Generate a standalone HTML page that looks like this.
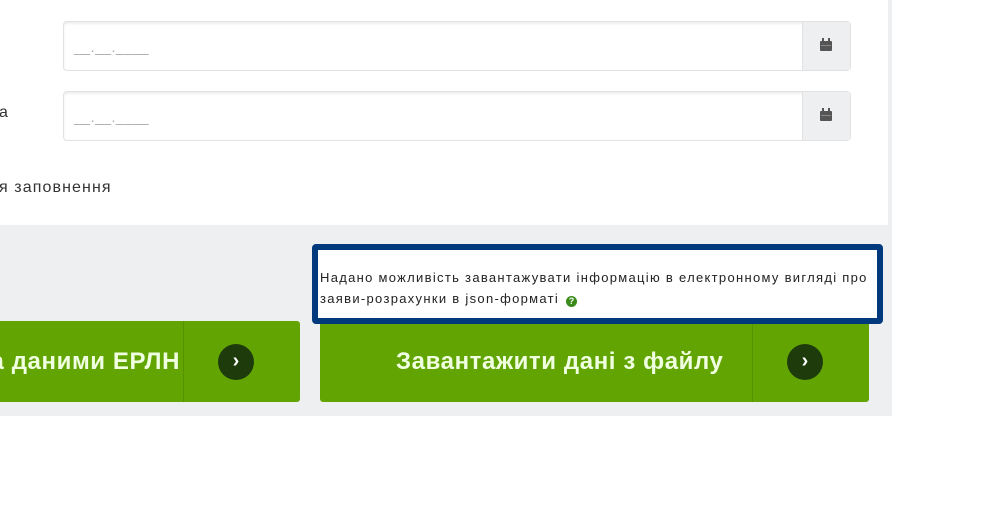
<!DOCTYPE html>
<html><head><meta charset="utf-8"><style>
*{margin:0;padding:0;box-sizing:border-box}
body{width:990px;height:528px;background:#fff;position:relative;overflow:hidden;font-family:"Liberation Sans","DejaVu Sans",sans-serif}
.panel{position:absolute;left:0;top:0;width:892px;height:416px;background:#eeeff1}
.form{position:absolute;left:0;top:0;width:888px;height:225px;background:#fff}
.inp{position:absolute;left:63px;width:788px;height:50px;border:1px solid #e2e2e2;border-radius:4px;background:#fff;box-shadow:inset 0 2px 2px #eee}
.inp .ph{position:absolute;left:10px;top:17px;font-size:14px;color:#aaa;letter-spacing:0.5px}
.inp .cal{position:absolute;right:0;top:0;width:48px;height:48px;background:#eeeff1;border-left:1px solid #e2e2e2}
.cal i{position:absolute;left:17px;top:19px;width:12px;height:10px;background:#555;border-radius:1px}
.cal i:before{content:"";position:absolute;left:2px;top:-3px;width:2px;height:3px;background:#555;box-shadow:6px 0 #555}
.cal i:after{content:"";position:absolute;left:1px;top:4px;width:10px;height:1px;background:#888}
.lbl{position:absolute;font-size:16px;color:#333;letter-spacing:1.1px}
.btn{position:absolute;top:321px;height:81px;background:#62a503;border-radius:3px;color:#f0ffe0;font-weight:bold;font-size:24px;line-height:81px;letter-spacing:0.6px;white-space:nowrap}
.btn .div{position:absolute;top:0;width:1px;height:81px;background:#559200}
.btn .c{position:absolute;top:23px;width:36px;height:36px;border-radius:50%;background:#1e3b0c;color:#fff;font-size:20px;line-height:34px;text-align:center;letter-spacing:0}
.note{position:absolute;left:312px;top:244px;width:571px;height:80px;border:6px solid #003a7d;border-radius:4px;background:#fff;font-size:13px;color:#222;padding:17px 0 0 2px;line-height:21px;letter-spacing:1.3px;white-space:nowrap}
.q{display:inline-block;width:11px;height:11px;border-radius:50%;background:#3a8a1a;color:#fff;font-size:9px;line-height:11px;text-align:center;font-weight:bold;vertical-align:-1px;margin-left:2px;letter-spacing:0}
</style></head><body>
<div class="panel"></div>
<div class="form">
<div style="position:absolute;left:63px;top:-10px;width:788px;height:10px;border:1px solid #e2e2e2;border-radius:4px"></div>
<div class="inp" style="top:21px"><span class="ph">__.__.____</span><div class="cal"><i></i></div></div>
<div class="lbl" style="left:-1px;top:104px">а</div>
<div class="inp" style="top:91px"><span class="ph">__.__.____</span><div class="cal"><i></i></div></div>
<div class="lbl" style="left:-1px;top:179px">я заповнення</div>
</div>
<div class="btn" style="left:-20px;width:320px"><span style="position:absolute;right:120px">а даними ЕРЛН</span><div class="div" style="left:203px"></div><div class="c" style="left:238px">›</div></div>
<div class="btn" style="left:320px;width:549px"><span style="position:absolute;left:76px">Завантажити дані з файлу</span><div class="div" style="left:432px"></div><div class="c" style="left:467px">›</div></div>
<div class="note">Надано можливість завантажувати інформацію в електронному вигляді про<br>заяви-розрахунки в json-форматі <span class="q">?</span></div>
</body></html>
